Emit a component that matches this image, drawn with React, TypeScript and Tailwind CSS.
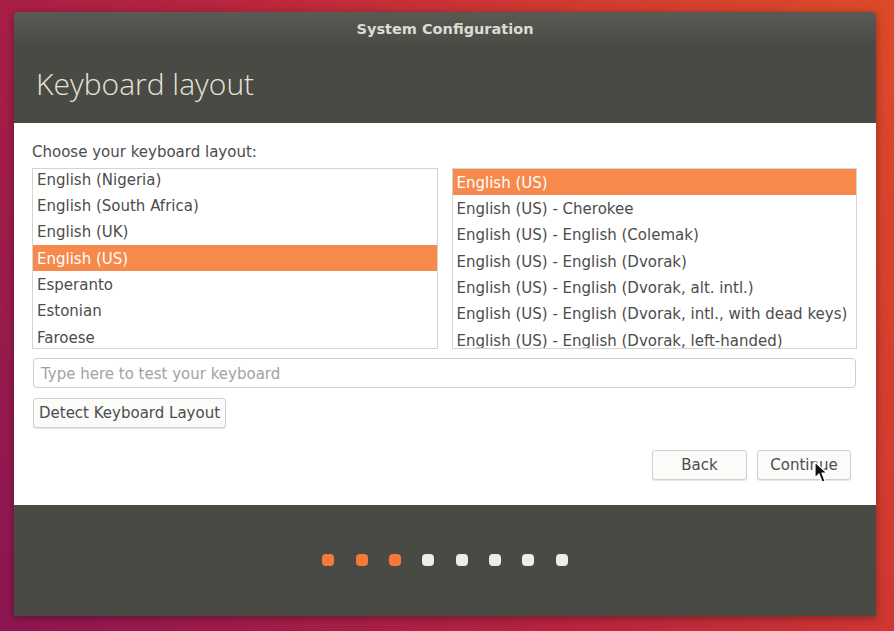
import React from "react";

const leftItems = [
  "English (Nigeria)",
  "English (South Africa)",
  "English (UK)",
  "English (US)",
  "Esperanto",
  "Estonian",
  "Faroese",
];
const rightItems = [
  "English (US)",
  "English (US) - Cherokee",
  "English (US) - English (Colemak)",
  "English (US) - English (Dvorak)",
  "English (US) - English (Dvorak, alt. intl.)",
  "English (US) - English (Dvorak, intl., with dead keys)",
  "English (US) - English (Dvorak, left-handed)",
];

const font = { fontFamily: '"DejaVu Sans", "Noto Sans", sans-serif' };

function List({ items, selected, offset }: { items: string[]; selected: number; offset: string }) {
  return (
    <div className="h-[181px] flex-1 overflow-hidden border border-[#d4d4d0] bg-white">
      <div className={offset}>
        {items.map((t, i) => (
          <div
            key={t}
            className={
              "flex h-[26.3px] items-center whitespace-nowrap pl-[4px] pt-[2px] text-[15px] " +
              (i === selected ? "bg-[#f7894c] text-white" : "text-[#4c4c4c]")
            }
          >
            {t}
          </div>
        ))}
      </div>
    </div>
  );
}

const btn =
  "h-[30px] rounded-[3px] border border-[#cfcfcb] bg-[#fbfbfa] text-[15px] text-[#4c4c4c] shadow-[0_1px_1px_rgba(0,0,0,0.1)]";

export default function App() {
  return (
    <div
      className="relative h-[631px] w-[894px] overflow-hidden bg-[linear-gradient(60deg,#8c1652_0%,#b6243f_45%,#d23a30_75%,#dc4a28_100%)] pl-[14px] pr-[18px] pt-[12px]"
      style={font}
    >
      <div className="flex h-[604px] w-[862px] flex-col overflow-hidden rounded-t-[4px] shadow-[0_2px_8px_rgba(0,0,0,0.35)]">
        {/* title bar */}
        <div className="flex h-[33px] items-center justify-center bg-[linear-gradient(#5a5a55,#4c4c47)] pt-[2px]">
          <span className="text-[14.5px] font-bold text-[#dedbd3]">System Configuration</span>
        </div>
        {/* header */}
        <div className="flex h-[78px] items-center bg-[#4a4a45] pl-[22px]">
          <span
            className="text-[30px] leading-[34px] text-[#e6e3dc]"
            style={{ fontFamily: '"Open Sans", "DejaVu Sans", sans-serif', fontWeight: 300 }}
          >
            Keyboard layout
          </span>
        </div>
        {/* content */}
        <div className="flex h-[382px] flex-col bg-white pl-[18px] pr-[19px] pt-[20px]">
          <div className="h-[25px] text-[15px] leading-[18px] text-[#4c4c4c]">Choose your keyboard layout:</div>
          <div className="flex gap-[14px]">
            <List items={leftItems} selected={3} offset="-mt-[3px]" />
            <List items={rightItems} selected={0} offset="mt-0" />
          </div>
          <div className="mx-[1px] mt-[9px] flex h-[30px] items-center rounded-[4px] border border-[#cfcfcb] pl-[7px] pt-[1px] text-[15px] leading-[18px] text-[#a2a2a2]">
            Type here to test your keyboard
          </div>
          <div className="ml-[1px] mt-[10px]">
            <button className={btn + " w-[193px] pt-[1px]"}>Detect Keyboard Layout</button>
          </div>
          <div className="mr-[6px] mt-[22px] flex justify-end gap-[10px]">
            <button className={btn + " w-[95px] pt-[1px]"}>Back</button>
            <button className={btn + " w-[94px] pt-[1px]"}>Continue</button>
          </div>
        </div>
        {/* bottom */}
        <div className="flex h-[111px] items-start justify-center bg-[#4a4a45] pt-[49px]">
          <div className="flex gap-[21.3px]">
            {[0, 1, 2, 3, 4, 5, 6, 7].map((i) => (
              <div
                key={i}
                className={"h-[12px] w-[12px] rounded-[4px] " + (i < 3 ? "bg-[#f47a3a]" : "bg-[#ececea]")}
              />
            ))}
          </div>
        </div>
      </div>
      {/* mouse cursor */}
      <svg className="absolute left-[814px] top-[461px]" width="14" height="23" viewBox="0 0 14 23">
        <path
          d="M1 1 L1 17 L5 13 L8 21 L11 20 L8 12 L13 12 Z"
          fill="#111"
          stroke="#fff"
          strokeWidth="1.2"
          strokeLinejoin="round"
        />
      </svg>
    </div>
  );
}
